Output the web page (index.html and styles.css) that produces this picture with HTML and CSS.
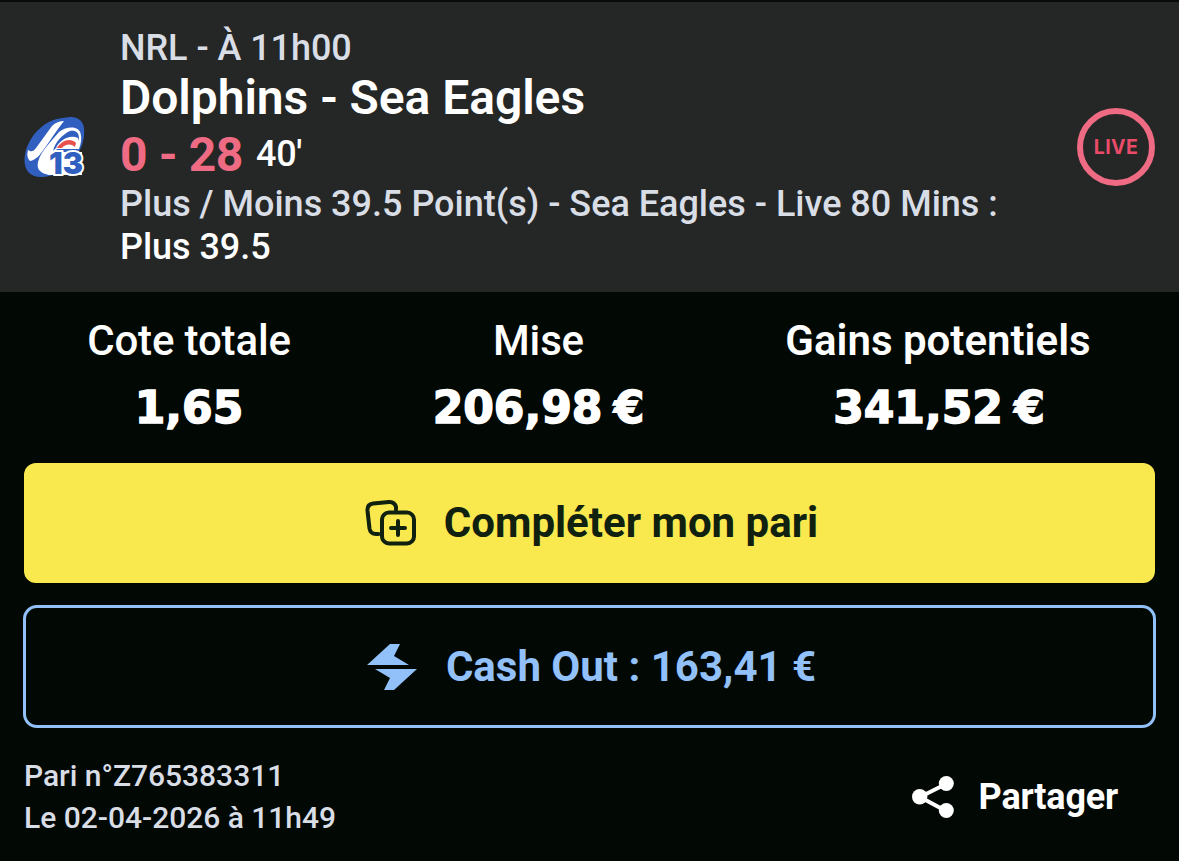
FILE: index.html
```html
<!DOCTYPE html>
<html lang="fr">
<head>
<meta charset="utf-8">
<title>Pari</title>
<link rel="stylesheet" href="styles.css">
</head>
<body>
<article class="ticket">
  <header class="event">
    <svg class="sport" viewBox="0 0 66 66" width="66" height="66" aria-hidden="true">
      <path fill="#315fc0" d="M43 3.500C52 1.500 59 6 60 14C61 24 58 34 52 43C43 56 29 63 17 63C6 63 0 56 0.500 45C1 32 9 19 20 11C27 6 35 4 43 3.500Z"/>
      <path fill="#fff" d="M40 7C36 7 31 8.500 28 12L12 34C9 38 7 38 4 36C3 40 3 44 6 47C12 46 16 41 20 35C26 27 32 17 40 7Z"/>
      <path fill="#fff" d="M14 54C12 42 25 30 35 18C43 12 54 12 56.500 19C58 24 57 30 55 35H33L25 44V61C20 60 16 58 14 54Z"/>
      <path fill="#315fc0" d="M29 37C31 28 39 20 46 17C51 16 55 18 55 24L54 27C48 23 40 25 33 33Z"/>
      <path fill="#fff" d="M32 34C35 27 45 20 54 24L54 32H35Z"/>
      <path fill="#e8504d" d="M33 34C37 27 46 23 52 29L51 33C47 29 41 30 38 34Z"/>
      <path fill="#fff" d="M25 38H58V61H25Z"/>
      <text class="sport-number" x="25" y="60" textLength="34" lengthAdjust="spacingAndGlyphs">13</text>
    </svg>
    <div class="details">
      <p class="league">NRL - À 11h00</p>
      <h1 class="teams">Dolphins - Sea Eagles</h1>
      <p class="score-row"><span class="score">0 - 28</span><span class="minute">40'</span></p>
      <p class="market">Plus / Moins 39.5 Point(s) - Sea Eagles - Live 80 Mins :</p>
      <p class="pick">Plus 39.5</p>
    </div>
    <span class="live">LIVE</span>
  </header>

  <section class="totals">
    <div class="total"><span class="label odds">Cote totale</span><span class="amount">1,65</span></div>
    <div class="total"><span class="label stake">Mise</span><span class="amount">206,98 €</span></div>
    <div class="total"><span class="label gains">Gains potentiels</span><span class="amount">341,52 €</span></div>
  </section>

  <section class="actions">
    <button class="button complete" type="button">
      <svg width="52" height="48" viewBox="0 0 52 48" fill="none" stroke="#11210f" stroke-width="4" stroke-linecap="round" aria-hidden="true">
        <path d="M14.500 35H12Q6.500 35 5.500 29.500L3.500 11.500Q3 5.500 9 4.500L25 3Q30.500 2.500 32 8V10.500"/>
        <rect x="18" y="13.500" width="32" height="31" rx="7"/>
        <path d="M27 29H41M34 22V36"/>
      </svg>
      <span class="complete-text">Compléter mon pari</span>
    </button>
    <button class="button cashout" type="button">
      <svg width="50" height="46" viewBox="0 0 50 46" fill="#92c0f8" aria-hidden="true">
        <path d="M23 0H33L27 12L42 21H0ZM8 25H50L27 46H17L23 34Z"/>
      </svg>
      <span class="cashout-text">Cash Out : 163,41 €</span>
    </button>
  </section>

  <footer class="foot">
    <div class="reference">
      <p class="ref-number">Pari n°Z765383311</p>
      <p class="ref-date">Le 02-04-2026 à 11h49</p>
    </div>
    <button class="share" type="button">
      <svg width="42" height="42" viewBox="0 0 42 42" fill="#fff" aria-hidden="true">
        <path d="M34 8L8 21L34 35" fill="none" stroke="#fff" stroke-width="4"/>
        <circle cx="34.300" cy="7.500" r="7.500"/><circle cx="7.700" cy="20.700" r="7.700"/><circle cx="34.300" cy="34.500" r="7.500"/>
      </svg>
      <span class="share-text">Partager</span>
    </button>
  </footer>
</article>
</body>
</html>
```
FILE: styles.css
```css
* { box-sizing: border-box; }
body { margin: 0; background: #020804; color: #fff; font-family: Roboto, sans-serif; }
p, h1 { margin: 0; white-space: nowrap; }
button { font-family: inherit; border: 0; padding: 0; background: none; white-space: nowrap; }
svg { display: block; flex: none; }

.ticket { width: 1179px; height: 861px; overflow: hidden; display: flex; flex-direction: column; }

.event { height: 292px; flex: none; border-top: 2px solid #060a08; background: #242725; padding: 0 24px; display: flex; align-items: center; }
.sport { margin-right: 30px; }
.sport-number { font: 900 30px Inter, sans-serif; fill: #315fc0; stroke: #fff; stroke-width: 4px; stroke-linejoin: miter; paint-order: stroke; }
.details { flex: 1; font-size: 36px; font-weight: 500; padding-top: 2px; }
.league { line-height: 42px; color: #d9dde6; letter-spacing: -0.05px; }
.teams { font-size: 48px; font-weight: 600; line-height: 58px; letter-spacing: -0.05px; }
.score-row { display: flex; align-items: center; line-height: 56px; }
.score { color: #ee6b83; font-size: 48px; font-weight: 700; width: 136px; letter-spacing: -0.4px; }
.minute { font-size: 36px; letter-spacing: -0.3px; margin-top: -2px; }
.market { line-height: 43px; color: #d9dde6; letter-spacing: -0.01px; }
.pick { line-height: 43px; letter-spacing: -0.05px; }
.live { width: 78px; height: 78px; border: 6px solid #ee6b83; border-radius: 50%; display: flex; align-items: center; justify-content: center; color: #e94b69; font: 700 19.5px Inter, sans-serif; letter-spacing: 0.4px; }

.totals { height: 171px; flex: none; display: grid; grid-template-columns: 203px 212px 305px; column-gap: 142px; justify-content: center; padding-top: 24px; }
.total { display: flex; flex-direction: column; align-items: center; white-space: nowrap; }
.label { font-size: 42px; line-height: 50px; font-weight: 500; letter-spacing: -0.15px; }
.gains { font-weight: 600; margin-left: -2px; letter-spacing: 0; }
.amount { margin-top: 16px; font: 700 44px/52px "DejaVu Sans", sans-serif; letter-spacing: 0; word-spacing: -4px; -webkit-text-stroke: 1.5px #fff; }

.actions { padding: 0 23px; display: flex; flex-direction: column; gap: 22px; }
.button { display: flex; align-items: center; justify-content: center; gap: 28px; font-size: 42px; font-weight: 700; }
.complete { height: 120px; margin: 0 1px; border-radius: 12px; background: #f9e84e; color: #11210f; padding-left: 3px; }
.complete-text { margin-top: -2px; letter-spacing: 0; }
.cashout { height: 123px; border: 3px solid #92c0f8; border-radius: 14px; color: #92c0f8; padding-left: 4px; gap: 29px; }
.cashout-text { letter-spacing: 0; }

.foot { flex: 1; display: flex; justify-content: space-between; align-items: flex-start; padding: 27px 61px 0 24px; }
.reference { color: #d9dde6; font-size: 30px; line-height: 42px; font-weight: 500; letter-spacing: -0.02px; }
.share { display: flex; align-items: center; gap: 25px; margin-top: 21px; color: #fff; font-size: 36px; font-weight: 700; letter-spacing: -0.2px; }
```
